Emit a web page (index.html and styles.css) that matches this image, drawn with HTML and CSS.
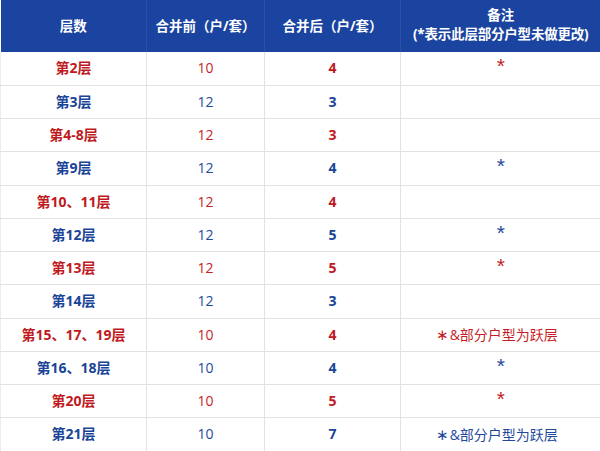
FILE: index.html
```html
<!DOCTYPE html>
<html lang="zh-CN">
<head>
<meta charset="utf-8">
<link rel="stylesheet" href="styles.css">
</head>
<body>
<table class="grid">
  <colgroup>
    <col class="c1"><col class="c2"><col class="c3"><col class="c4">
  </colgroup>
  <thead>
    <tr>
      <th>层数</th>
      <th>合并前（户/套）</th>
      <th>合并后（户/套）</th>
      <th><span class="l1">备注</span><span class="l2">(*表示此层部分户型未做更改)</span></th>
    </tr>
  </thead>
  <tbody>
    <tr class="red"><td class="floor">第2层</td><td>10</td><td class="after">4</td><td class="note"><span class="star">*</span></td></tr>
    <tr class="blue"><td class="floor">第3层</td><td>12</td><td class="after">3</td><td class="note"></td></tr>
    <tr class="red"><td class="floor">第4-8层</td><td>12</td><td class="after">3</td><td class="note"></td></tr>
    <tr class="blue"><td class="floor">第9层</td><td>12</td><td class="after">4</td><td class="note"><span class="star">*</span></td></tr>
    <tr class="red"><td class="floor">第10、11层</td><td>12</td><td class="after">4</td><td class="note"></td></tr>
    <tr class="blue"><td class="floor">第12层</td><td>12</td><td class="after">5</td><td class="note"><span class="star">*</span></td></tr>
    <tr class="red"><td class="floor">第13层</td><td>12</td><td class="after">5</td><td class="note"><span class="star">*</span></td></tr>
    <tr class="blue"><td class="floor">第14层</td><td>12</td><td class="after">3</td><td class="note"></td></tr>
    <tr class="red"><td class="floor">第15、17、19层</td><td>10</td><td class="after">4</td><td class="note"><span class="mix"><span class="mstar">∗</span>&amp;部分户型为跃层</span></td></tr>
    <tr class="blue"><td class="floor">第16、18层</td><td>10</td><td class="after">4</td><td class="note"><span class="star">*</span></td></tr>
    <tr class="red"><td class="floor">第20层</td><td>10</td><td class="after">5</td><td class="note"><span class="star">*</span></td></tr>
    <tr class="blue"><td class="floor">第21层</td><td>10</td><td class="after">7</td><td class="note"><span class="mix"><span class="mstar">∗</span>&amp;部分户型为跃层</span></td></tr>
  </tbody>
</table>
</body>
</html>
```

FILE: styles.css
```css
html, body {
  margin: 0;
  padding: 0;
  background: #ffffff;
}
body {
  font-family: "Open Sans", "Noto Sans CJK SC", sans-serif;
  width: 600px;
  height: 451px;
  overflow: hidden;
}
.grid {
  width: 600px;
  border-collapse: collapse;
  table-layout: fixed;
}
.c1 { width: 146px; }
.c2 { width: 118px; }
.c3 { width: 136px; }
.c4 { width: 200px; }

.grid th {
  background: #1b44a0;
  color: #ffffff;
  font-weight: 700;
  font-size: 13.5px;
  height: 52px;
  padding: 0;
  text-align: center;
  vertical-align: middle;
  border-left: 1px solid #2a52aa;
  line-height: 19px;
}
.grid th:first-child { border-left: none; }
.grid th .l1, .grid th .l2 { display: block; }
.grid th .l1 { margin-top: -2px; }
.grid th .l2 { letter-spacing: -0.2px; }

.grid td {
  height: 33.25px;
  padding: 0;
  text-align: center;
  vertical-align: middle;
  font-size: 14px;
  line-height: 20px;
  border: 1px solid #e2e2e2;
  box-sizing: border-box;
}
.grid td:first-child { border-left: 1px solid #ececec; }
.grid td:last-child { border-right: none; }
.grid tbody tr:first-child td { border-top: none; }

.floor, .after { font-weight: 700; }

.red td { color: #c41f28; }
.blue td { color: #1f4a9c; }
.red .floor, .red .after { color: #bf1a22; }
.blue .floor, .blue .after { color: #1a4496; }

.note { font-size: 13px; }
.mix { margin-right: 8px; }
.star {
  display: inline-block;
  font-family: "Liberation Sans", sans-serif;
  font-size: 21px;
  line-height: 20px;
  position: relative;
  top: -1px;
}
.mstar {
  display: inline-block;
  font-family: "Noto Sans CJK SC", sans-serif;
  font-size: 15px;
  margin-right: 1px;
}
```
